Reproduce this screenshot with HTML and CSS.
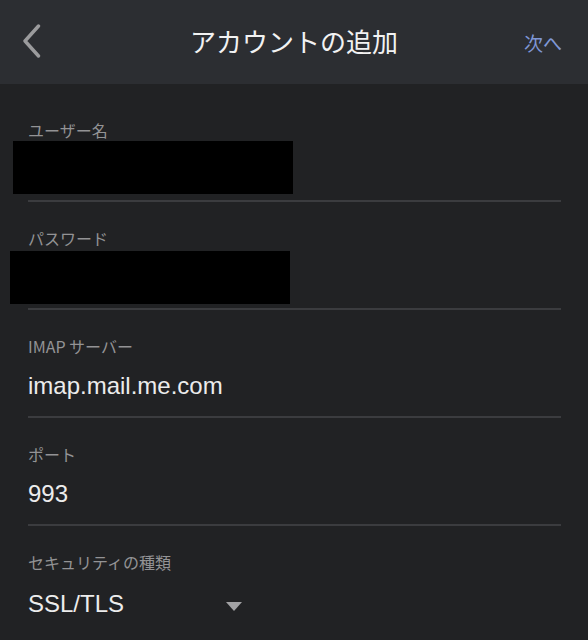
FILE: index.html
```html
<!DOCTYPE html>
<html lang="ja">
<head>
    <meta charset="UTF-8">
    <meta name="viewport" content="width=device-width, initial-scale=1.0">
    <title>アカウントの追加</title>
    <link rel="stylesheet" href="styles.css">
</head>
<body>
    <header class="nav-bar">
        <a class="nav-back" href="#" aria-label="戻る">
            <svg width="20" height="34" viewBox="0 0 20 34">
                <path d="M16.5 2 L3 17 L16.5 32" fill="none" stroke="#9b9b9d" stroke-width="3.4" stroke-linecap="round" stroke-linejoin="round"/>
            </svg>
        </a>
        <h1 class="nav-title">アカウントの追加</h1>
        <a class="nav-next" href="#">次へ</a>
    </header>

    <form class="account-form">
        <div class="field">
            <label class="field-label">ユーザー名</label>
            <div class="redact redact-user"></div>
        </div>

        <div class="field">
            <label class="field-label">パスワード</label>
            <div class="redact redact-pass"></div>
        </div>

        <div class="field">
            <label class="field-label">IMAP サーバー</label>
            <div class="field-value">imap.mail.me.com</div>
        </div>

        <div class="field">
            <label class="field-label">ポート</label>
            <div class="field-value">993</div>
        </div>

        <div class="field field-last">
            <label class="field-label">セキュリティの種類</label>
            <div class="field-value select">
                <span>SSL/TLS</span>
                <span class="caret"></span>
            </div>
        </div>
    </form>
</body>
</html>
```

FILE: styles.css
```css
body {
    margin: 0;
    background-color: #212224;
    font-family: "Liberation Sans", "Noto Sans CJK JP", sans-serif;
    color: #ececec;
}
.nav-bar {
    height: 84px;
    background-color: #2c2e32;
    display: grid;
    grid-template-columns: 120px 1fr 120px;
    align-items: center;
}
.nav-back {
    padding-left: 22px;
    padding-bottom: 2px;
    display: flex;
    align-items: center;
}
.nav-title {
    margin: 0;
    padding-bottom: 4px;
    text-align: center;
    font-family: "Noto Sans CJK JP", sans-serif;
    font-weight: 400;
    font-size: 26px;
    color: #f2f2f2;
    white-space: nowrap;
}
.nav-next {
    justify-self: end;
    margin-right: 26px;
    font-family: "Noto Sans CJK JP", sans-serif;
    font-size: 19px;
    color: #7f97d6;
    text-decoration: none;
    white-space: nowrap;
}
.account-form {
    margin-top: 10px;
}
.field {
    margin-left: 28px;
    margin-right: 27px;
    padding-top: 26px;
    height: 80px;
    border-bottom: 2px solid #3b3c3f;
}
.field-last {
    border-bottom: none;
}
.field-label {
    display: block;
    font-family: "Noto Sans CJK JP", sans-serif;
    font-size: 16px;
    line-height: 20px;
    color: #939395;
}
.field-value {
    margin-top: 15px;
    font-size: 24px;
    line-height: 30px;
}
.redact {
    background-color: #000;
    height: 53px;
    width: 280px;
}
.redact-user {
    margin: 1px 0 0 -15px;
}
.redact-pass {
    margin: 3px 0 0 -18px;
}
.select {
    display: flex;
    align-items: center;
    padding-top: 2px;
}
.caret {
    margin: 4px 0 0 102px;
    width: 0;
    height: 0;
    border-left: 8px solid transparent;
    border-right: 8px solid transparent;
    border-top: 9px solid #a2a2a4;
}
```
